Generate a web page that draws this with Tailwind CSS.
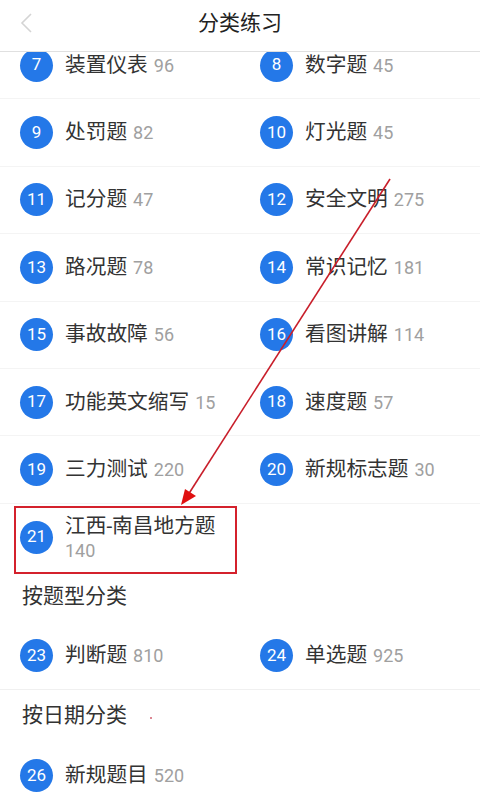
<!DOCTYPE html>
<html lang="zh">
<head>
<meta charset="utf-8">
<script src="https://cdn.jsdelivr.net/npm/@tailwindcss/browser@4"></script>
</head>
<body class="font-['Roboto','Noto_Sans_CJK_SC',sans-serif] bg-white">
<div class="relative w-[480px] h-[800px] overflow-hidden bg-white text-[#333]">
  <header class="relative z-10 h-[52px] flex items-center justify-center bg-white border-b border-[#e0e0e0]">
    <svg class="absolute left-[20px] top-[13px]" width="12" height="20" viewBox="0 0 12 20" fill="none"><path d="M11 1 2 10l9 9" stroke="#d4d4d4" stroke-width="1.6"/></svg>
    <h1 class="text-[21px] leading-none text-[#222] pb-[4px]">分类练习</h1>
  </header>

  <div class="-mt-[20px] text-[20.7px]">
    <div class="grid grid-cols-2 h-[67.4px] border-b border-[#f4f4f4]">
      <div class="flex items-center pl-[20px]"><span class="w-[33px] h-[33px] rounded-full bg-[#2478e8] text-white text-[17px] flex items-center justify-center">7</span><span class="ml-[12px] whitespace-nowrap">装置仪表</span><span class="ml-[6px] text-[18px] text-[#a0a0a0]">96</span></div>
      <div class="flex items-center pl-[20px]"><span class="w-[33px] h-[33px] rounded-full bg-[#2478e8] text-white text-[17px] flex items-center justify-center">8</span><span class="ml-[12px] whitespace-nowrap">数字题</span><span class="ml-[6px] text-[18px] text-[#a0a0a0]">45</span></div>
    </div>
    <div class="grid grid-cols-2 h-[67.4px] border-b border-[#f4f4f4]">
      <div class="flex items-center pl-[20px]"><span class="w-[33px] h-[33px] rounded-full bg-[#2478e8] text-white text-[17px] flex items-center justify-center">9</span><span class="ml-[12px] whitespace-nowrap">处罚题</span><span class="ml-[6px] text-[18px] text-[#a0a0a0]">82</span></div>
      <div class="flex items-center pl-[20px]"><span class="w-[33px] h-[33px] rounded-full bg-[#2478e8] text-white text-[17px] flex items-center justify-center">10</span><span class="ml-[12px] whitespace-nowrap">灯光题</span><span class="ml-[6px] text-[18px] text-[#a0a0a0]">45</span></div>
    </div>
    <div class="grid grid-cols-2 h-[67.4px] border-b border-[#f4f4f4]">
      <div class="flex items-center pl-[20px]"><span class="w-[33px] h-[33px] rounded-full bg-[#2478e8] text-white text-[17px] flex items-center justify-center">11</span><span class="ml-[12px] whitespace-nowrap">记分题</span><span class="ml-[6px] text-[18px] text-[#a0a0a0]">47</span></div>
      <div class="flex items-center pl-[20px]"><span class="w-[33px] h-[33px] rounded-full bg-[#2478e8] text-white text-[17px] flex items-center justify-center">12</span><span class="ml-[12px] whitespace-nowrap">安全文明</span><span class="ml-[6px] text-[18px] text-[#a0a0a0]">275</span></div>
    </div>
    <div class="grid grid-cols-2 h-[67.4px] border-b border-[#f4f4f4]">
      <div class="flex items-center pl-[20px]"><span class="w-[33px] h-[33px] rounded-full bg-[#2478e8] text-white text-[17px] flex items-center justify-center">13</span><span class="ml-[12px] whitespace-nowrap">路况题</span><span class="ml-[6px] text-[18px] text-[#a0a0a0]">78</span></div>
      <div class="flex items-center pl-[20px]"><span class="w-[33px] h-[33px] rounded-full bg-[#2478e8] text-white text-[17px] flex items-center justify-center">14</span><span class="ml-[12px] whitespace-nowrap">常识记忆</span><span class="ml-[6px] text-[18px] text-[#a0a0a0]">181</span></div>
    </div>
    <div class="grid grid-cols-2 h-[67.4px] border-b border-[#f4f4f4]">
      <div class="flex items-center pl-[20px]"><span class="w-[33px] h-[33px] rounded-full bg-[#2478e8] text-white text-[17px] flex items-center justify-center">15</span><span class="ml-[12px] whitespace-nowrap">事故故障</span><span class="ml-[6px] text-[18px] text-[#a0a0a0]">56</span></div>
      <div class="flex items-center pl-[20px]"><span class="w-[33px] h-[33px] rounded-full bg-[#2478e8] text-white text-[17px] flex items-center justify-center">16</span><span class="ml-[12px] whitespace-nowrap">看图讲解</span><span class="ml-[6px] text-[18px] text-[#a0a0a0]">114</span></div>
    </div>
    <div class="grid grid-cols-2 h-[67.4px] border-b border-[#f4f4f4]">
      <div class="flex items-center pl-[20px]"><span class="w-[33px] h-[33px] rounded-full bg-[#2478e8] text-white text-[17px] flex items-center justify-center">17</span><span class="ml-[12px] whitespace-nowrap">功能英文缩写</span><span class="ml-[6px] text-[18px] text-[#a0a0a0]">15</span></div>
      <div class="flex items-center pl-[20px]"><span class="w-[33px] h-[33px] rounded-full bg-[#2478e8] text-white text-[17px] flex items-center justify-center">18</span><span class="ml-[12px] whitespace-nowrap">速度题</span><span class="ml-[6px] text-[18px] text-[#a0a0a0]">57</span></div>
    </div>
    <div class="grid grid-cols-2 h-[67.4px] border-b border-[#f4f4f4]">
      <div class="flex items-center pl-[20px]"><span class="w-[33px] h-[33px] rounded-full bg-[#2478e8] text-white text-[17px] flex items-center justify-center">19</span><span class="ml-[12px] whitespace-nowrap">三力测试</span><span class="ml-[6px] text-[18px] text-[#a0a0a0]">220</span></div>
      <div class="flex items-center pl-[20px]"><span class="w-[33px] h-[33px] rounded-full bg-[#2478e8] text-white text-[17px] flex items-center justify-center">20</span><span class="ml-[12px] whitespace-nowrap">新规标志题</span><span class="ml-[6px] text-[18px] text-[#a0a0a0]">30</span></div>
    </div>

    <div class="flex items-center h-[67px] pl-[20px]">
      <span class="w-[33px] h-[33px] rounded-full bg-[#2478e8] text-white text-[17px] flex items-center justify-center">21</span>
      <div class="ml-[12px] flex flex-col">
        <span class="leading-[27px] whitespace-nowrap">江西-南昌地方题</span>
        <span class="leading-[22px] text-[18px] text-[#a0a0a0]">140</span>
      </div>
    </div>

    <h2 class="h-[52px] pl-[22px] flex items-center text-[21px] font-normal">按题型分类</h2>

    <div class="grid grid-cols-2 h-[67.4px] border-b border-[#f0f0f0]">
      <div class="flex items-center pl-[20px]"><span class="w-[33px] h-[33px] rounded-full bg-[#2478e8] text-white text-[17px] flex items-center justify-center">23</span><span class="ml-[12px] whitespace-nowrap">判断题</span><span class="ml-[6px] text-[18px] text-[#a0a0a0]">810</span></div>
      <div class="flex items-center pl-[20px]"><span class="w-[33px] h-[33px] rounded-full bg-[#2478e8] text-white text-[17px] flex items-center justify-center">24</span><span class="ml-[12px] whitespace-nowrap">单选题</span><span class="ml-[6px] text-[18px] text-[#a0a0a0]">925</span></div>
    </div>

    <h2 class="h-[52px] pl-[22px] flex items-center text-[21px] font-normal">按日期分类</h2>

    <div class="grid grid-cols-2 h-[67.4px]">
      <div class="flex items-center pl-[20px]"><span class="w-[33px] h-[33px] rounded-full bg-[#2478e8] text-white text-[17px] flex items-center justify-center">26</span><span class="ml-[12px] whitespace-nowrap">新规题目</span><span class="ml-[6px] text-[18px] text-[#a0a0a0]">520</span></div>
    </div>
  </div>

  <!-- annotation drawn over the screenshot -->
  <div class="absolute left-[14px] top-[506px] w-[223px] h-[68px] border-2 border-[#d4212c] z-20"></div>
  <svg class="absolute inset-0 z-20 pointer-events-none" width="480" height="800" viewBox="0 0 480 800" fill="none">
    <path d="M390 179 188 495" stroke="#c81e2a" stroke-width="1.6"/>
    <path d="M181 505 185 489 196 496Z" fill="#e01010"/>
    <circle cx="151" cy="718" r="1" fill="#d06070"/>
  </svg>
</div>
</body>
</html>
